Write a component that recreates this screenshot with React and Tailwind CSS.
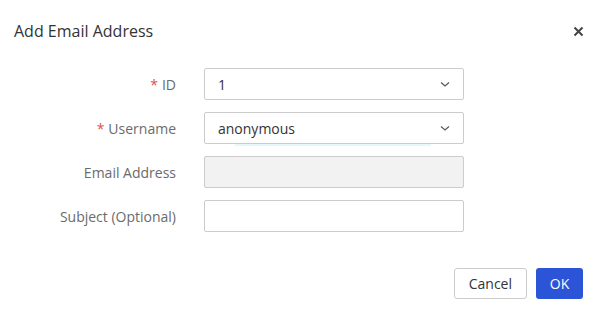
import React from "react";

function ChevronDown() {
  return (
    <svg width="12" height="12" viewBox="0 0 12 12" className="text-[#555]">
      <path d="M2 4.5 L6 8 L10 4.5" fill="none" stroke="currentColor" strokeWidth="1.1" />
    </svg>
  );
}

function Row({ label, required, children }) {
  return (
    <div className="flex items-center h-[32px]">
      <div className="w-[176px] text-right text-[14px] text-[#6b6b6b]">
        {required && <span className="text-[#d9534f] mr-1">*</span>}
        {label}
      </div>
      <div className="ml-[28px] w-[260px] h-full relative">{children}</div>
    </div>
  );
}

export default function App() {
  return (
    <div
      className="w-[600px] h-[313px] bg-white relative"
      style={{ fontFamily: '"Open Sans", "Noto Sans", sans-serif' }}
    >
      <div className="flex items-center justify-between pl-[14px] pr-[16px] pt-[19px]">
        <h1 className="text-[16px] text-[#333] leading-[24px]">Add Email Address</h1>
        <button className="text-[#444] w-[12px] h-[12px] flex items-center justify-center">
          <svg width="11" height="11" viewBox="0 0 11 11">
            <path d="M1.5 1.5 L9.5 9.5 M9.5 1.5 L1.5 9.5" stroke="currentColor" strokeWidth="2" />
          </svg>
        </button>
      </div>

      <div className="flex flex-col gap-[12px] mt-[25px]">
        <Row label="ID" required>
          <div className="h-full border border-[#ccc] rounded-[2px] flex items-center justify-between pl-[13px] pr-[12px] text-[14px] text-[#333]">
            <span>1</span>
            <ChevronDown />
          </div>
        </Row>
        <Row label="Username" required>
          <div className="h-full border border-[#ccc] rounded-[2px] flex items-center justify-between pl-[13px] pr-[12px] text-[14px] text-[#333]">
            <span>anonymous</span>
            <ChevronDown />
          </div>
          <div className="absolute left-[31px] top-[32px] w-[196px] h-[2px] bg-[#e6f6fd]"></div>
        </Row>
        <Row label="Email Address">
          <div className="h-full border border-[#ccc] rounded-[2px] bg-[#f2f2f2]"></div>
        </Row>
        <Row label="Subject (Optional)">
          <div className="h-full border border-[#ccc] rounded-[2px] bg-white"></div>
        </Row>
      </div>

      <div className="flex justify-end gap-[9px] pr-[17px] mt-[36px]">
        <button className="h-[31px] px-[14px] border border-[#ccc] rounded-[3px] text-[14px] text-[#333] bg-white">
          Cancel
        </button>
        <button className="h-[31px] w-[47px] rounded-[3px] text-[14px] text-white bg-[#2b55d6]">
          OK
        </button>
      </div>
    </div>
  );
}
